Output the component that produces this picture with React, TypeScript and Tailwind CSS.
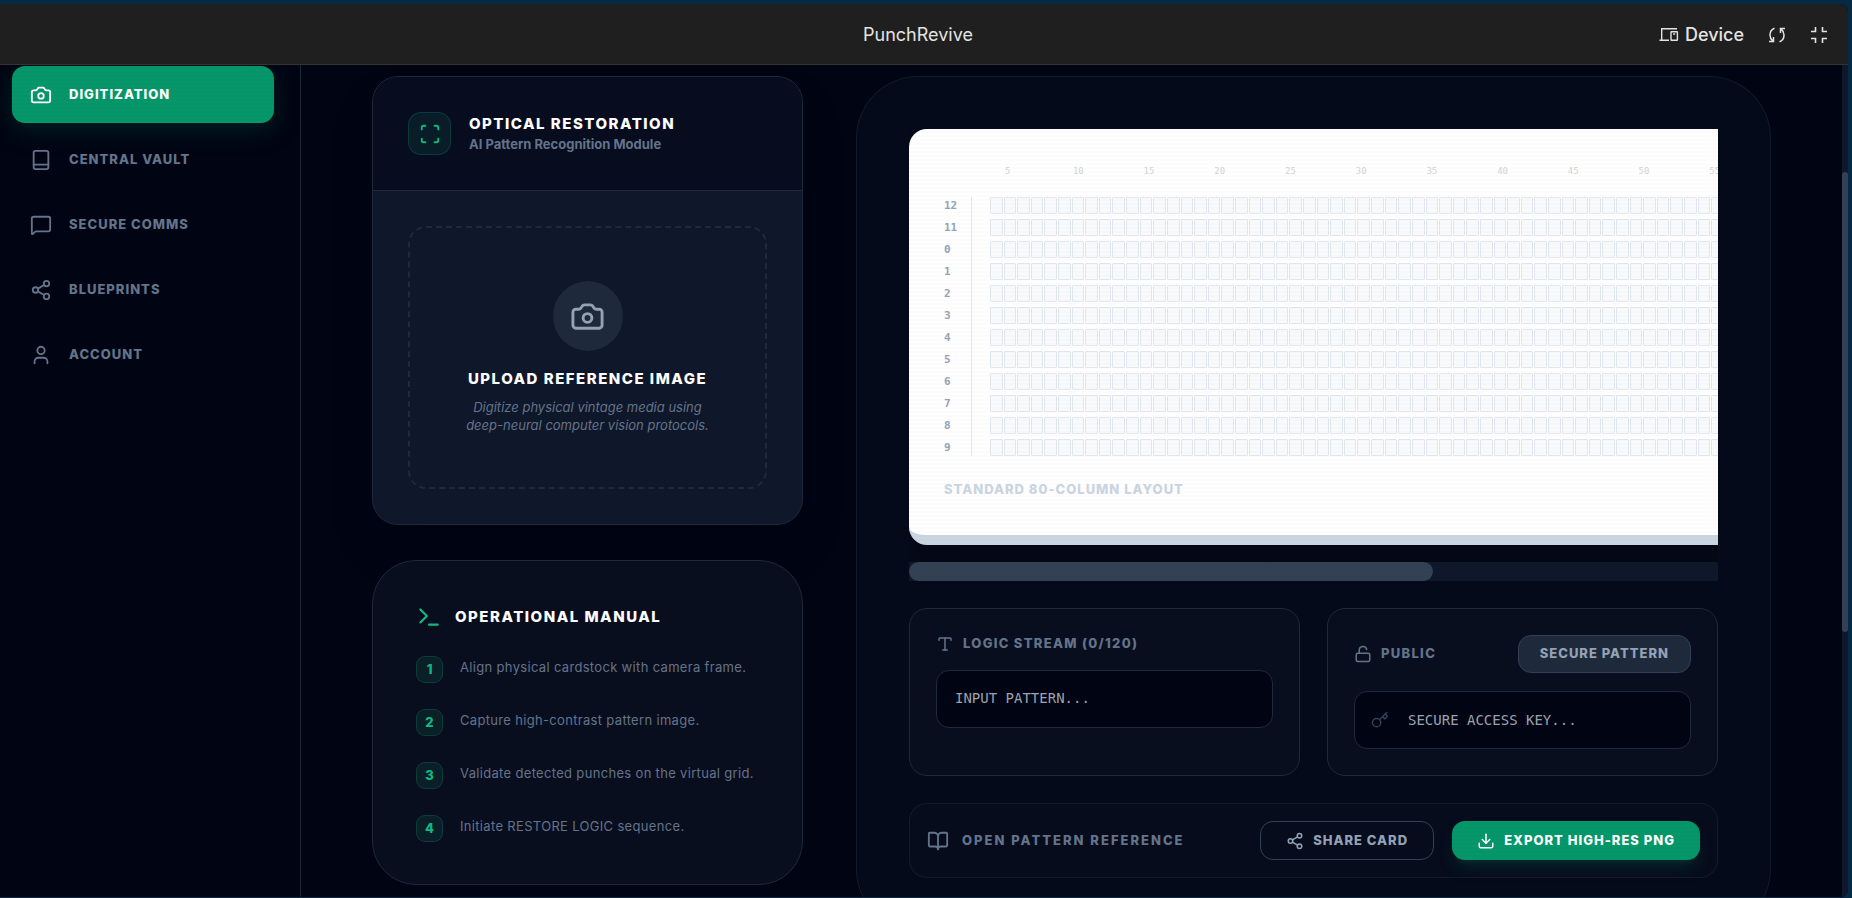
import {
  BookOpen,
  Camera,
  Download,
  Key,
  LockOpen,
  MessageSquare,
  Share2,
  Terminal,
  Type,
  User,
} from "lucide-react";
import clsx from "clsx";
import { ReactNode } from "react";

const BookIcon = ({ className }: { className?: string }) => (
  <svg
    viewBox="0 0 24 24"
    fill="none"
    stroke="currentColor"
    strokeWidth="2"
    strokeLinecap="round"
    strokeLinejoin="round"
    className={className}
  >
    <rect x="4" y="2" width="16" height="20" rx="2" />
    <path d="M4 17h16" />
  </svg>
);

const ScanIcon = ({ className }: { className?: string }) => (
  <svg
    viewBox="0 0 24 24"
    fill="none"
    stroke="currentColor"
    strokeWidth="2"
    strokeLinecap="round"
    strokeLinejoin="round"
    className={className}
  >
    <path d="M3 7V5a2 2 0 0 1 2-2h2M17 3h2a2 2 0 0 1 2 2v2M21 17v2a2 2 0 0 1-2 2h-2M7 21H5a2 2 0 0 1-2-2v-2" />
  </svg>
);

const DevicesIcon = () => (
  <svg viewBox="0 0 20 16" fill="none" stroke="currentColor" strokeWidth="1.4" className="h-4 w-5">
    <path d="M18 1.700H2.700v11.600M0.500 13.300H10" />
    <rect x="12" y="4.700" width="6.400" height="8.600" rx="0.500" />
    <path d="M14.200 7h2" />
  </svg>
);

const ReloadIcon = () => (
  <svg viewBox="0 0 18 18" fill="none" stroke="currentColor" strokeWidth="1.5" className="size-[18px]">
    <path d="M6.500 2.200C3.800 3.200 2 5.800 2 9c0 2.300 1 4.300 2.800 5.800M1 15.600h4.500v-4.500" />
    <path d="M11.500 15.800c2.700-1 4.500-3.600 4.500-6.800 0-2.300-1-4.300-2.800-5.800M17 2.400h-4.500v4.500" />
  </svg>
);

const CollapseIcon = () => (
  <svg viewBox="0 0 18 18" fill="none" stroke="currentColor" strokeWidth="1.6" className="size-[18px]">
    <path d="M1 5.500h4.500V1M12.500 1v4.500H17M1 12.500h4.500V17M12.500 17v-4.500H17" />
  </svg>
);

const navItems = [
  { label: "DIGITIZATION", icon: Camera, active: true },
  { label: "CENTRAL VAULT", icon: BookIcon },
  { label: "SECURE COMMS", icon: MessageSquare },
  { label: "BLUEPRINTS", icon: Share2 },
  { label: "ACCOUNT", icon: User },
];

const steps = [
  "Align physical cardstock with camera frame.",
  "Capture high-contrast pattern image.",
  "Validate detected punches on the virtual grid.",
  "Initiate RESTORE LOGIC sequence.",
];

const COLUMNS = Array.from({ length: 80 }, (_, i) => i + 1);
const ROWS = ["12", "11", "0", "1", "2", "3", "4", "5", "6", "7", "8", "9"];

const TopBar = () => (
  <header className="flex h-[61px] shrink-0 items-center border-b border-[#333333] bg-[#1f1f1f] pt-0.5 pr-5 pl-2 text-[#e3e3e3]">
    <div className="flex-1" />
    <h1 className="text-lg">PunchRevive</h1>
    <div className="flex flex-1 items-center justify-end gap-6">
      <button className="flex items-center gap-1.5 text-lg font-medium">
        <DevicesIcon />
        Device
      </button>
      <button aria-label="Reload">
        <ReloadIcon />
      </button>
      <button aria-label="Exit full screen">
        <CollapseIcon />
      </button>
    </div>
  </header>
);

const Sidebar = () => (
  <aside className="w-[301px] shrink-0 border-r border-[#1e293b] pt-px pr-[26px] pl-3">
    <nav className="flex flex-col gap-2">
      {navItems.map(({ label, icon: Icon, active }) => (
        <a
          key={label}
          href="#"
          className={clsx(
            "flex h-[57px] items-center gap-[17px] rounded-[13px] px-[18px] text-[13px] font-extrabold tracking-[1px]",
            active
              ? "bg-[#059669] text-white shadow-[0_6px_26px_rgba(6,78,59,0.4)]"
              : "text-[#64748b]"
          )}
        >
          <Icon className="size-[22px]" />
          {label}
        </a>
      ))}
    </nav>
  </aside>
);

const UploadCard = () => (
  <section className="overflow-hidden rounded-[26px] border border-[#1e293b] bg-[#0f172a] shadow-2xl">
    <div className="flex h-[114px] items-center gap-[18px] border-b border-[#1e293b] bg-[#070c1e] px-[35px]">
      <div className="flex size-[43px] items-center justify-center rounded-[13px] border border-[#10b981]/20 bg-[#10b981]/10 text-[#10b981]">
        <ScanIcon className="size-[22px]" />
      </div>
      <div className="pb-0.5">
        <h2 className="text-[15px] leading-[22px] font-extrabold tracking-widest text-white">
          OPTICAL RESTORATION
        </h2>
        <p className="text-[13px] leading-[18px] font-bold text-[#64748b]">
          AI Pattern Recognition Module
        </p>
      </div>
    </div>
    <div className="p-[35px]">
      <button className="flex h-[263px] w-full flex-col items-center justify-center rounded-[18px] border-2 border-dashed border-[#1e293b]">
        <span className="flex size-[70px] items-center justify-center rounded-full bg-[#1e293b] text-[#94a3b8]">
          <Camera className="size-[35px]" />
        </span>
        <span className="mt-[17px] text-[15px] leading-[22px] font-extrabold tracking-widest text-white">
          UPLOAD REFERENCE IMAGE
        </span>
        <span className="mt-2 w-[260px] text-[13px] leading-[18px] text-[#64748b] italic">
          Digitize physical vintage media using deep-neural computer vision protocols.
        </span>
      </button>
    </div>
  </section>
);

const ManualCard = () => (
  <section className="rounded-[44px] border border-[#1e293b] bg-[#090e1e] px-[43px] pt-[43px] pb-[42px]">
    <div className="flex h-[26px] items-center gap-[13px]">
      <Terminal className="size-[26px] text-[#10b981]" />
      <h2 className="text-[15px] font-extrabold tracking-widest text-white">OPERATIONAL MANUAL</h2>
    </div>
    <ol className="mt-[26px] flex flex-col gap-[26px]">
      {steps.map((step, i) => (
        <li key={step} className="flex gap-[17px]">
          <span className="flex size-[27px] shrink-0 items-center justify-center rounded-[9px] border border-[#10b981]/20 bg-[#10b981]/10 text-[13px] font-extrabold text-[#10b981]">
            {i + 1}
          </span>
          <span className="text-[13px] leading-[22px] tracking-wide text-[#64748b]">{step}</span>
        </li>
      ))}
    </ol>
  </section>
);

const PunchCard = () => (
  <div>
    <div className="overflow-hidden pb-[17px]">
      <div className="w-[1249px] rounded-[18px] border-b-[10px] border-[#cbd5e1] bg-white p-[35px] font-['DejaVu_Sans_Mono',monospace] shadow-[0_28px_55px_rgba(0,0,0,0.25)]">
        <div className="flex h-[14px] w-[1131px] items-center">
          {COLUMNS.map((col) => (
            <span
              key={col}
              className="flex w-0 flex-1 justify-center text-[9px] leading-[14px] text-neutral-300"
            >
              {col % 5 === 0 ? col : ""}
            </span>
          ))}
        </div>
        <div className="mt-[19px] flex w-[1134px]">
          <div className="mr-[18px] flex w-7 flex-col gap-[5px] border-r border-[#e2e8f0]">
            {ROWS.map((row) => (
              <span key={row} className="text-[11px] leading-[17px] font-bold text-[#94a3b8]">
                {row}
              </span>
            ))}
          </div>
          <div className="flex flex-1 flex-col gap-[5px]">
            {ROWS.map((row) => (
              <div key={row} className="flex h-[17px] gap-px">
                {COLUMNS.map((col) => (
                  <span
                    key={col}
                    className="flex-1 rounded-[1px] border border-[#e2e8f0] bg-[#f8fafc]"
                  />
                ))}
              </div>
            ))}
          </div>
        </div>
        <p className="mt-6 pb-0.5 font-[Inter,sans-serif] text-[13px] leading-[18px] font-extrabold tracking-[1px] text-[#cbd5e1]">
          STANDARD 80-COLUMN LAYOUT
        </p>
      </div>
    </div>
    <div className="h-[19px] bg-[#0f172a]">
      <div className="h-full w-[524px] rounded-full bg-[#334155]" />
    </div>
  </div>
);

const Panel = ({ children }: { children: ReactNode }) => (
  <div className="rounded-[18px] border border-[#1e293b] bg-[#090e1e] p-[26px]">{children}</div>
);

const inputStyle =
  "block h-[58px] w-full resize-none rounded-[13px] border border-[#1e293b] bg-[#010413] font-['DejaVu_Sans_Mono',monospace] text-sm text-[#9ca3af] placeholder:text-[#9ca3af]";

const Workbench = () => (
  <section className="rounded-[62px] border border-[#1e293b]/50 bg-[#050a1a] p-13">
    <PunchCard />
    <div className="mt-[27px] grid grid-cols-2 gap-[27px]">
      <Panel>
        <label
          htmlFor="pattern"
          className="flex h-[18px] items-center gap-[9px] text-[13px] font-extrabold tracking-widest text-[#64748b]"
        >
          <Type className="size-[18px]" />
          LOGIC STREAM (0/120)
        </label>
        <textarea
          id="pattern"
          placeholder="INPUT PATTERN..."
          className={clsx(inputStyle, "mt-[17px] px-[18px] py-[17px]")}
        />
      </Panel>
      <Panel>
        <div className="flex items-center justify-between">
          <label
            htmlFor="accessKey"
            className="flex items-center gap-[9px] text-[13px] font-extrabold tracking-widest text-[#64748b]"
          >
            <LockOpen className="size-[18px]" />
            PUBLIC
          </label>
          <button className="h-[38px] rounded-[13px] border border-[#334155] bg-[#1e293b] px-[21px] text-[13px] font-extrabold tracking-[1px] text-[#94a3b8]">
            SECURE PATTERN
          </button>
        </div>
        <div className="relative mt-[18px]">
          <Key className="absolute top-5 left-[17px] size-[18px] text-[#334155]" />
          <input
            id="accessKey"
            placeholder="SECURE ACCESS KEY..."
            className={clsx(inputStyle, "pr-[18px] pl-[53px]")}
          />
        </div>
      </Panel>
    </div>
    <div className="mt-[27px] flex items-center justify-between rounded-[18px] border border-[#1e293b]/50 bg-[#070c1c] p-[17px]">
      <button className="flex items-center gap-[13px] text-[13px] font-extrabold tracking-[2px] text-[#64748b]">
        <BookOpen className="size-[22px]" />
        OPEN PATTERN REFERENCE
      </button>
      <div className="flex gap-[18px]">
        <button className="flex h-[39px] items-center gap-[9px] rounded-[13px] border border-[#334155] px-[25px] text-[13px] font-extrabold tracking-[1px] text-[#94a3b8]">
          <Share2 className="size-[18px]" />
          SHARE CARD
        </button>
        <button className="flex h-[39px] items-center gap-[9px] rounded-[13px] bg-[#059669] px-[25px] text-[13px] font-extrabold tracking-[1px] text-white shadow-lg shadow-[#064e3b]/40">
          <Download className="size-[18px]" />
          EXPORT HIGH-RES PNG
        </button>
      </div>
    </div>
  </section>
);

export default function App() {
  return (
    <div className="h-screen overflow-hidden bg-[#052a45] pt-1 pr-1 pb-px font-[Inter,sans-serif]">
      <div className="flex h-full flex-col overflow-hidden rounded-r-lg bg-[#010413]">
        <TopBar />
        <div className="relative flex min-h-0 flex-1 overflow-hidden">
          <Sidebar />
          <main className="min-w-0 flex-1 px-[71px] pt-[11px]">
            <div className="grid grid-cols-12 items-start gap-[53px]">
              <div className="col-span-4 flex flex-col gap-[35px]">
                <UploadCard />
                <ManualCard />
              </div>
              <div className="col-span-8 min-w-0">
                <Workbench />
              </div>
            </div>
          </main>
          <div className="w-1.5 shrink-0 bg-[#0f172a] pt-[107px]">
            <div className="h-[460px] rounded-full bg-[#334155]" />
          </div>
          {/* Scan line overlay */}
          <div className="pointer-events-none absolute inset-0 bg-[repeating-linear-gradient(to_bottom,transparent_0_2px,rgba(0,0,0,0.01)_2px_4px)]" />
        </div>
      </div>
    </div>
  );
}
